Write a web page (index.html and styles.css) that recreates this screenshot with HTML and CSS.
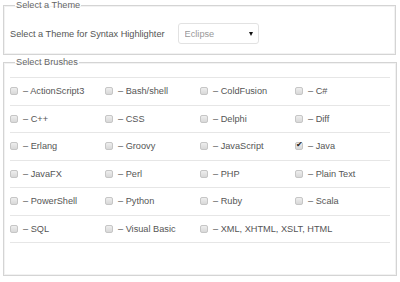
FILE: index.html
```html
<!DOCTYPE html>
<html lang="en">
<head>
    <meta charset="UTF-8">
    <meta name="viewport" content="width=device-width, initial-scale=1.0">
    <title>Syntax Highlighter Settings</title>
    <link rel="stylesheet" href="styles.css">
</head>
<body>
    <fieldset class="group theme-group">
        <legend>Select a Theme</legend>
        <div class="theme-row">
            <label for="theme">Select a Theme for Syntax Highlighter</label>
            <span class="select-wrap">
                <select id="theme">
                    <option>Eclipse</option>
                    <option>Default</option>
                    <option>Django</option>
                    <option>Emacs</option>
                    <option>Midnight</option>
                </select>
            </span>
        </div>
    </fieldset>

    <fieldset class="group brush-group">
        <legend>Select Brushes</legend>
        <table class="brushes">
            <tr>
                <td><label><input type="checkbox"> &ndash; ActionScript3</label></td>
                <td><label><input type="checkbox"> &ndash; Bash/shell</label></td>
                <td><label><input type="checkbox"> &ndash; ColdFusion</label></td>
                <td><label><input type="checkbox"> &ndash; C#</label></td>
            </tr>
            <tr>
                <td><label><input type="checkbox"> &ndash; C++</label></td>
                <td><label><input type="checkbox"> &ndash; CSS</label></td>
                <td><label><input type="checkbox"> &ndash; Delphi</label></td>
                <td><label><input type="checkbox"> &ndash; Diff</label></td>
            </tr>
            <tr>
                <td><label><input type="checkbox"> &ndash; Erlang</label></td>
                <td><label><input type="checkbox"> &ndash; Groovy</label></td>
                <td><label><input type="checkbox"> &ndash; JavaScript</label></td>
                <td><label><input type="checkbox" checked> &ndash; Java</label></td>
            </tr>
            <tr>
                <td><label><input type="checkbox"> &ndash; JavaFX</label></td>
                <td><label><input type="checkbox"> &ndash; Perl</label></td>
                <td><label><input type="checkbox"> &ndash; PHP</label></td>
                <td><label><input type="checkbox"> &ndash; Plain Text</label></td>
            </tr>
            <tr>
                <td><label><input type="checkbox"> &ndash; PowerShell</label></td>
                <td><label><input type="checkbox"> &ndash; Python</label></td>
                <td><label><input type="checkbox"> &ndash; Ruby</label></td>
                <td><label><input type="checkbox"> &ndash; Scala</label></td>
            </tr>
            <tr>
                <td><label><input type="checkbox"> &ndash; SQL</label></td>
                <td><label><input type="checkbox"> &ndash; Visual Basic</label></td>
                <td colspan="2"><label><input type="checkbox"> &ndash; XML, XHTML, XSLT, HTML</label></td>
            </tr>
        </table>
    </fieldset>
</body>
</html>
```

FILE: styles.css
```css
body {
    margin: 0;
    padding: 0 4px 0 3px;
    font-family: "Liberation Sans", Arial, sans-serif;
    font-size: 9.2px;
    color: #555;
    background-color: #fff;
}
.group {
    margin: 0;
    border: 1px solid #d4d4d4;
    box-shadow: inset 0 0 0 1px #f2f2f2;
    padding: 0 6px;
}
.group legend {
    padding: 0 1px;
    margin-left: 5px;
    color: #666;
    font-size: 9.2px;
    line-height: 10px;
}
.theme-group {
    height: 55px;
    box-sizing: border-box;
}
.theme-row {
    display: flex;
    align-items: center;
    gap: 13px;
    padding-top: 13px;
}
.select-wrap {
    position: relative;
    display: inline-block;
}
.select-wrap select {
    appearance: none;
    -webkit-appearance: none;
    width: 81px;
    height: 21px;
    padding: 0 0 0 6px;
    border: 1px solid #e2e2e2;
    border-radius: 3px;
    background-color: #fff;
    color: #999;
    font-family: inherit;
    font-size: 9.2px;
}
.select-wrap::after {
    content: "";
    position: absolute;
    right: 6px;
    top: 9px;
    border-left: 2.5px solid transparent;
    border-right: 2.5px solid transparent;
    border-top: 4px solid #111;
    pointer-events: none;
}
.brush-group {
    margin-top: 2px;
    height: 219px;
    box-sizing: border-box;
}
.brushes {
    border-collapse: collapse;
    width: 380px;
    margin-top: 10px;
}
.brushes td {
    width: 95px;
    height: 26.5px;
    padding: 0;
    border-top: 1px solid #e6e6e6;
    border-bottom: 1px solid #e6e6e6;
    vertical-align: middle;
    white-space: nowrap;
}
.brushes label {
    display: flex;
    align-items: center;
    gap: 5px;
}
.brushes input {
    appearance: none;
    -webkit-appearance: none;
    width: 8px;
    height: 8px;
    margin: 0;
    border: 1px solid #c6c6c6;
    border-radius: 2px;
    background: linear-gradient(#eee, #d8d8d8);
    position: relative;
}
.brushes input:checked::after {
    content: "\2714";
    position: absolute;
    left: 0;
    top: -3px;
    font-size: 8px;
    color: #222;
}
```
